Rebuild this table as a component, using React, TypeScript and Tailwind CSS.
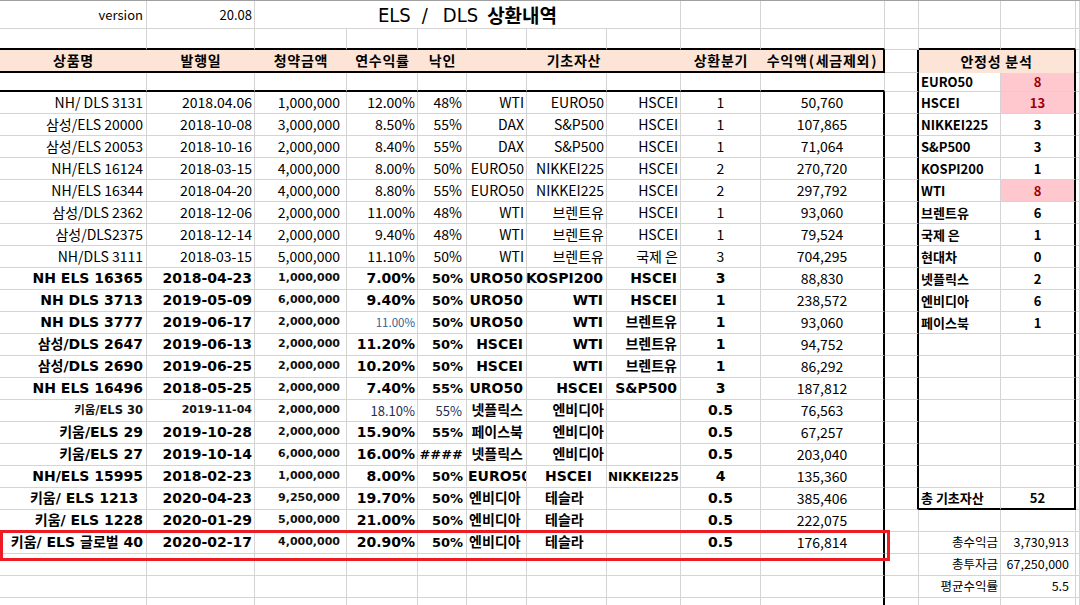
import React from 'react';

type B = 'thin' | 'thick' | 'none';
const RB: Record<B, string> = {
  thin: 'border-r border-r-[#d4d4d4]',
  thick: 'border-r-2 border-r-black',
  none: '',
};
const BB: Record<B, string> = {
  thin: 'border-b border-b-[#d4d4d4]',
  thick: 'border-b-2 border-b-black',
  none: '',
};
const SPAN: Record<number, string> = { 1: '', 2: 'col-span-2', 3: 'col-span-3', 6: 'col-span-6' };

const F1 = "font-['Noto_Sans_CJK_KR',sans-serif] text-[14px] text-black";
const F1v = "font-['Noto_Sans_CJK_KR',sans-serif] text-[13px] text-black";
const F1n = "font-['Noto_Sans_CJK_KR',sans-serif] text-[13px] text-[#1f2d55]";
const F1b = "font-['Noto_Sans_CJK_KR',sans-serif] text-[11.5px] text-[#3b5c93]";
const FS = "font-['Noto_Sans_CJK_KR',sans-serif] text-[12.5px] text-black";
const F2 = "font-['DejaVu_Sans','Noto_Sans_CJK_KR',sans-serif] font-bold text-[14px] text-black";
const F2e = "font-['DejaVu_Sans','Noto_Sans_CJK_KR',sans-serif] font-bold text-[13px] text-black";
const F2c = "font-['DejaVu_Sans','Noto_Sans_CJK_KR',sans-serif] font-bold text-[12px] text-black";
const F2m = "font-['DejaVu_Sans','Noto_Sans_CJK_KR',sans-serif] font-bold text-[11.5px] text-[#111]";
const F2s = "font-['DejaVu_Sans','Noto_Sans_CJK_KR',sans-serif] font-bold text-[11px] text-[#111]";
const FR = "font-['Noto_Sans_CJK_KR',sans-serif] font-bold text-[13px] text-black";
const FRred = "font-['Noto_Sans_CJK_KR',sans-serif] font-bold text-[13px] text-[#9c0006] bg-[#ffc7ce]";
const FH = "font-['Noto_Sans_CJK_KR',sans-serif] font-bold text-[14px] tracking-[0.75px] text-black bg-[#fce4d6]";

function Cell({
  span = 1,
  r = 'thin',
  b = 'thin',
  cls = '',
  children,
}: {
  span?: number;
  r?: B;
  b?: B;
  cls?: string;
  children?: React.ReactNode;
}) {
  return (
    <div className={`${SPAN[span]} ${RB[r]} ${BB[b]} flex items-center overflow-hidden whitespace-nowrap ${cls}`}>
      {children !== undefined && children !== '' ? <span className="shrink-0">{children}</span> : null}
    </div>
  );
}

type Row = [string, string][];
const AL1 = [
  'justify-end pr-[3px]',
  'justify-end pr-[2px]',
  'justify-end pr-[6px]',
  'justify-end pr-[2px]',
  'justify-end pr-[4px]',
  'justify-end pr-[2px]',
  'justify-end pr-[2px]',
  'justify-end pr-[2px]',
  'justify-center',
  'justify-center',
];
const AL2 = [
  'justify-end pr-[3px]',
  'justify-end pr-[2px]',
  'justify-end pr-[6px]',
  'justify-end pr-[2px]',
  'justify-end pr-[3px]',
  'justify-end pr-[3px]',
  'justify-end pr-[3px]',
  'justify-end pr-[3px]',
  'justify-center',
  'justify-center',
];
const FT2 = [F2, F2, F2s, F2, F2e, F2, F2, F2, F2, F1];

const g1 = (t: string[]): Row => t.map((x, i) => [x, `${F1} ${AL1[i]}`] as [string, string]);
const g2 = (t: string[]): Row => t.map((x, i) => [x, `${FT2[i]} ${AL2[i]}`] as [string, string]);

const rows: Row[] = [
  g1(['NH/ DLS 3131', '2018.04.06', '1,000,000', '12.00%', '48%', 'WTI', 'EURO50', 'HSCEI', '1', '50,760']),
  g1(['삼성/ELS 20000', '2018-10-08', '3,000,000', '8.50%', '55%', 'DAX', 'S&P500', 'HSCEI', '1', '107,865']),
  g1(['삼성/ELS 20053', '2018-10-16', '2,000,000', '8.40%', '55%', 'DAX', 'S&P500', 'HSCEI', '1', '71,064']),
  g1(['NH/ELS 16124', '2018-03-15', '4,000,000', '8.00%', '50%', 'EURO50', 'NIKKEI225', 'HSCEI', '2', '270,720']),
  g1(['NH/ELS 16344', '2018-04-20', '4,000,000', '8.80%', '55%', 'EURO50', 'NIKKEI225', 'HSCEI', '2', '297,792']),
  g1(['삼성/DLS 2362', '2018-12-06', '2,000,000', '11.00%', '48%', 'WTI', '브렌트유', 'HSCEI', '1', '93,060']),
  g1(['삼성/DLS2375', '2018-12-14', '2,000,000', '9.40%', '48%', 'WTI', '브렌트유', 'HSCEI', '1', '79,524']),
  g1(['NH/DLS 3111', '2018-03-15', '5,000,000', '11.10%', '50%', 'WTI', '브렌트유', '국제 은', '3', '704,295']),
  g2(['NH ELS 16365', '2018-04-23', '1,000,000', '7.00%', '50%', 'URO50', 'KOSPI200', 'HSCEI', '3', '88,830']),
  g2(['NH DLS 3713', '2019-05-09', '6,000,000', '9.40%', '50%', 'URO50', 'WTI', 'HSCEI', '1', '238,572']),
  g2(['NH DLS 3777', '2019-06-17', '2,000,000', '11.00%', '50%', 'URO50', 'WTI', '브렌트유', '1', '93,060']),
  g2(['삼성/DLS 2647', '2019-06-13', '2,000,000', '11.20%', '50%', 'HSCEI', 'WTI', '브렌트유', '1', '94,752']),
  g2(['삼성/DLS 2690', '2019-06-25', '2,000,000', '10.20%', '50%', 'HSCEI', 'WTI', '브렌트유', '1', '86,292']),
  g2(['NH ELS 16496', '2018-05-25', '2,000,000', '7.40%', '55%', 'URO50', 'HSCEI', 'S&P500', '3', '187,812']),
  [
    ['키움/ELS 30', `${F2m} justify-end pr-[3px]`],
    ['2019-11-04', `${F2s} justify-end pr-[2px]`],
    ['2,000,000', `${F2s} justify-end pr-[6px]`],
    ['18.10%', `${F1n} justify-end pr-[2px]`],
    ['55%', `${F1n} justify-end pr-[4px]`],
    ['넷플릭스', `${F2} justify-end pr-[3px]`],
    ['엔비디아', `${F2} justify-end pr-[2px]`],
    ['', ''],
    ['0.5', `${F2} justify-center`],
    ['76,563', `${F1} justify-center`],
  ],
  g2(['키움/ELS 29', '2019-10-28', '2,000,000', '15.90%', '55%', '페이스북', '엔비디아', '', '0.5', '67,257']),
  g2(['키움/ELS 27', '2019-10-14', '6,000,000', '16.00%', '####', '넷플릭스', '엔비디아', '', '0.5', '203,040']),
  g2(['NH/ELS 15995', '2018-02-23', '1,000,000', '8.00%', '50%', 'EURO50', 'HSCEI', 'NIKKEI225', '4', '135,360']),
  g2(['키움/ ELS 1213\u00a0', '2020-04-23', '9,250,000', '19.70%', '50%', '엔비디아', '테슬라', '', '0.5', '385,406']),
  g2(['키움/ ELS 1228', '2020-01-29', '5,000,000', '21.00%', '50%', '엔비디아', '테슬라', '', '0.5', '222,075']),
  g2(['키움/ ELS 글로벌 40', '2020-02-17', '4,000,000', '20.90%', '50%', '엔비디아', '테슬라', '', '0.5', '176,814']),
];

// overrides
rows[10][3] = ['11.00%', `${F1b} justify-end pr-[2px]`];
rows[17][5] = ['EURO50', `${F2} justify-start pl-[1px]`];
rows[17][6] = ['HSCEI', `${F2} justify-start pl-[18px]`];
rows[17][7] = ['NIKKEI225', `${F2c} justify-center`];
for (const i of [18, 19, 20]) {
  rows[i][5] = ['엔비디아', `${F2} justify-start pl-[2px]`];
  rows[i][6] = ['테슬라', `${F2} justify-start pl-[18px]`];
}
for (const i of [15, 16]) {
  rows[i][6] = ['엔비디아', `${F2} justify-end pr-[2px]`];
}

type RS = { l: string; v: string; red?: boolean; sum?: boolean } | null;
const right: RS[] = [
  { l: 'HSCEI', v: '13', red: true },
  { l: 'NIKKEI225', v: '3' },
  { l: 'S&P500', v: '3' },
  { l: 'KOSPI200', v: '1' },
  { l: 'WTI', v: '8', red: true },
  { l: '브렌트유', v: '6' },
  { l: '국제 은', v: '1' },
  { l: '현대차', v: '0' },
  { l: '넷플릭스', v: '2' },
  { l: '엔비디아', v: '6' },
  { l: '페이스북', v: '1' },
  null,
  null,
  null,
  null,
  null,
  null,
  null,
  { l: '총 기초자산', v: '52' },
  null,
  { l: '총수익금', v: '3,730,913', sum: true },
  { l: '총투자금', v: '67,250,000', sum: true },
  { l: '평균수익률', v: '5.5', sum: true },
  null,
];

export default function App() {
  const blank10 = Array.from({ length: 3 }, () => ['', ''] as [string, string]);
  return (
    <div className="relative w-[1080px] h-[605px] overflow-hidden bg-white">
      <div className="grid grid-cols-[147px_108px_92px_71px_49px_60px_80px_74px_80px_124px_34px_82px_75px_4px] grid-rows-[28px_21px_23px_19px_repeat(24,22px)] border-t border-t-[#a0a0a0]">
        {/* Row 1 */}
        <Cell cls={`${F1v} justify-end pr-[3px]`}>version</Cell>
        <Cell cls={`${F1v} justify-end pr-[2px]`}>20.08</Cell>
        <div className="col-span-6 border-r border-r-[#d4d4d4] border-b border-b-[#d4d4d4] flex items-center justify-center whitespace-nowrap text-black">
          <span className="font-['Liberation_Sans_Narrow','DejaVu_Sans_Condensed','Noto_Sans_CJK_KR',sans-serif] text-[20px] leading-none">ELS</span>
          <span className="ml-[11px] font-['Liberation_Sans_Narrow','DejaVu_Sans_Condensed','Noto_Sans_CJK_KR',sans-serif] text-[20px] leading-none">/</span>
          <span className="ml-[15px] font-['Liberation_Sans_Narrow','DejaVu_Sans_Condensed','Noto_Sans_CJK_KR',sans-serif] text-[20px] leading-none">DLS</span>
          <span className="ml-[9px] font-['Noto_Sans_CJK_KR',sans-serif] font-bold text-[19px] leading-none">상환내역</span>
        </div>
        <Cell />
        <Cell />
        <Cell />
        <Cell />
        <Cell />
        <Cell />

        {/* Row 2 */}
        {Array.from({ length: 10 }).map((_, i) => (
          <Cell key={`r2-${i}`} b="thick" />
        ))}
        <Cell />
        <Cell b="thick" />
        <Cell b="thick" />
        <Cell />

        {/* Header row */}
        <Cell r="none" b="thick" cls={`${FH} justify-center`}>상품명</Cell>
        <Cell r="none" b="thick" cls={`${FH} justify-center`}>발행일</Cell>
        <Cell r="none" b="thick" cls={`${FH} justify-center`}>청약금액</Cell>
        <Cell r="none" b="thick" cls={`${FH} justify-center`}>연수익률</Cell>
        <Cell r="none" b="thick" cls={`${FH} justify-center`}>낙인</Cell>
        <Cell span={3} r="none" b="thick" cls={`${FH} justify-center`}>기초자산</Cell>
        <Cell r="none" b="thick" cls={`${FH} justify-center`}>상환분기</Cell>
        <Cell r="thick" b="thick" cls={`${FH} justify-center`}>
          수익액<span className="px-[1px]">(</span>세금제외<span className="pl-[1px]">)</span>
        </Cell>
        <Cell r="thick" />
        <Cell span={2} r="thick" b="none" cls={`${FH} justify-center`}>안정성 분석</Cell>
        <Cell />

        {/* Row 4 */}
        {Array.from({ length: 10 }).map((_, i) => (
          <Cell key={`r4-${i}`} b="thick" />
        ))}
        <Cell r="thick" />
        <Cell cls={`${FR} justify-start pl-[2px]`}>EURO50</Cell>
        <Cell r="thick" cls={`${FRred} justify-center`}>8</Cell>
        <Cell />

        {/* Data rows */}
        {Array.from({ length: 24 }).map((_, i) => {
          const row: Row = i < rows.length ? rows[i] : [...blank10, ...blank10, ...blank10, ['', '']];
          const rs = right[i];
          const inBox = i <= 18;
          const last = i === 18;
          return (
            <React.Fragment key={`d-${i}`}>
              {row.map(([t, c], j) => (
                <Cell key={`d-${i}-${j}`} r={j === 9 ? 'thick' : 'thin'} cls={c}>
                  {t}
                </Cell>
              ))}
              <Cell r={inBox ? 'thick' : 'thin'} />
              <Cell
                b={last ? 'thick' : 'thin'}
                cls={rs ? (rs.sum ? `${FS} justify-end pr-[2px]` : `${FR} justify-start pl-[2px]`) : ''}
              >
                {rs ? rs.l : ''}
              </Cell>
              <Cell
                r={inBox ? 'thick' : 'thin'}
                b={last ? 'thick' : 'thin'}
                cls={rs ? (rs.sum ? `${FS} justify-end pr-[6px]` : rs.red ? `${FRred} justify-center` : `${FR} justify-center`) : ''}
              >
                {rs ? rs.v : ''}
              </Cell>
              <Cell />
            </React.Fragment>
          );
        })}
      </div>

      {/* Red highlight box */}
      <div className="absolute left-0 top-[530px] w-[890px] h-[31px] border-[3px] border-[#ed1c24]" />
    </div>
  );
}
